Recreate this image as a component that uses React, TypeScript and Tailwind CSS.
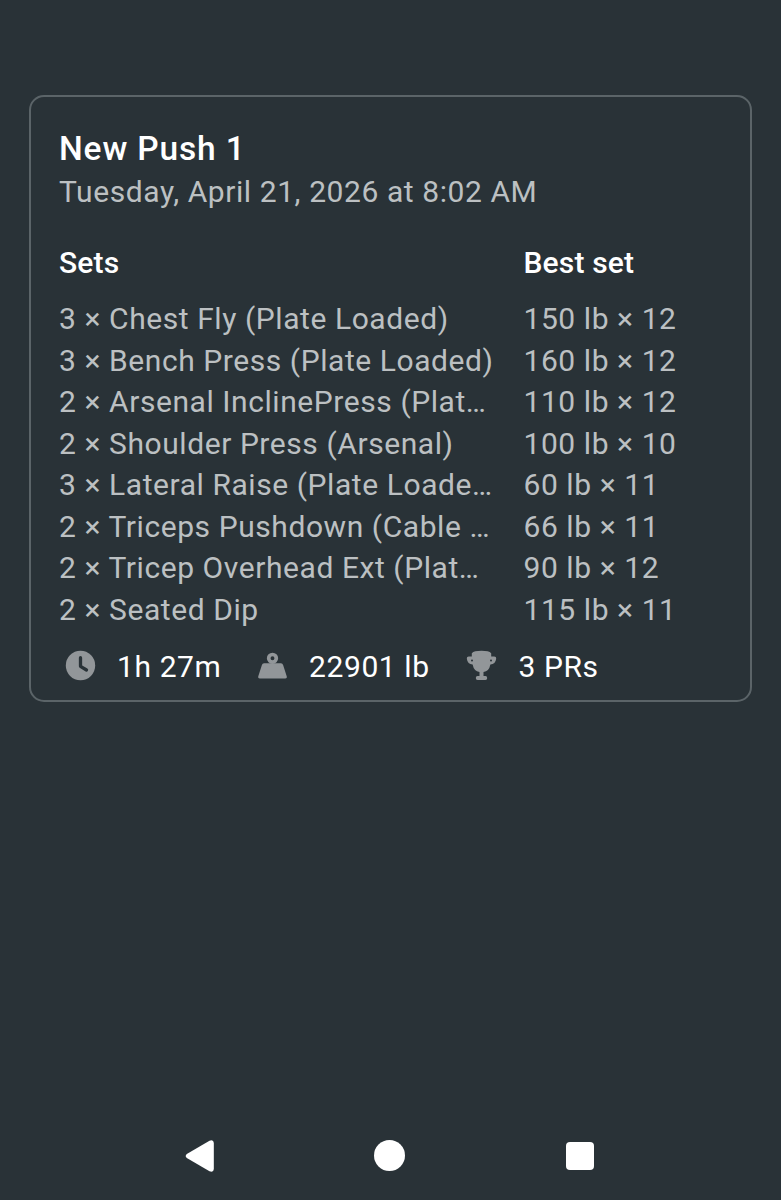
const rows: [string, string][] = [
  ["3 × Chest Fly (Plate Loaded)", "150 lb × 12"],
  ["3 × Bench Press (Plate Loaded)", "160 lb × 12"],
  ["2 × Arsenal InclinePress (Plat…", "110 lb × 12"],
  ["2 × Shoulder Press (Arsenal)", "100 lb × 10"],
  ["3 × Lateral Raise (Plate Loade…", "60 lb × 11"],
  ["2 × Triceps Pushdown (Cable …", "66 lb × 11"],
  ["2 × Tricep Overhead Ext (Plat…", "90 lb × 12"],
  ["2 × Seated Dip", "115 lb × 11"],
];

export default function App() {
  return (
    <div className="flex h-[1200px] w-[781px] flex-col bg-[#293237] pt-[95px] font-['Roboto',sans-serif] text-[30px] whitespace-nowrap text-[#bcc0c2]">
      <main className="mx-[29px] h-[607px] rounded-[15px] border-2 border-[#5b6468] pt-[31px] pl-7">
        <h1 className="h-[42px] text-[33.5px] leading-[42px] font-medium tracking-[0.85px] text-white">New Push 1</h1>
        <p className="h-[42px] leading-[43px] tracking-[0.58px]">Tuesday, April 21, 2026 at 8:02 AM</p>
        <div className="mt-[30px] flex h-[42px] leading-[42px] font-medium tracking-[0.15px] text-white">
          <span className="w-[464.5px]">Sets</span>
          <span>Best set</span>
        </div>
        <div className="mt-[14px] tracking-[0.57px]">
          {rows.map(([name, best]) => (
            <div key={name} className="flex h-[41.5px] leading-[42px]">
              <span className="w-[464.5px]">{name}</span>
              <span>{best}</span>
            </div>
          ))}
        </div>
        <div className="mt-[17px] flex h-[38px] items-center tracking-[0.6px] text-white">
          <svg className="ml-[5px] size-[32px] shrink-0 text-[#929699]" viewBox="0 0 32 32" fill="none">
            <circle cx="16.5" cy="15.5" r="14.7" fill="currentColor" />
            <path d="M16.5 7.7v8.6l6 3.7" stroke="#293237" strokeWidth="3.3" strokeLinecap="round" strokeLinejoin="round" />
          </svg>
          <span className="ml-[21px] w-[139px]">1h 27m</span>
          <svg className="size-[32px] shrink-0 text-[#929699]" viewBox="0 0 32 32" fill="currentColor">
            <path d="M8 13.3h17q1.600 0 2.100 1.600l3.700 11.600q.5 2.100-1.500 2.100H3.700q-2 0-1.500-2.100l3.700-11.600Q6.400 13.300 8 13.300Z" />
            <circle cx="16.500" cy="8.300" r="3.800" fill="none" stroke="currentColor" strokeWidth="3.700" />
          </svg>
          <span className="ml-[21px] w-[156px]">22901 lb</span>
          <svg className="size-[32px] shrink-0 text-[#929699]" viewBox="0 0 32 32" fill="currentColor">
            <path d="M6.800 3.200Q9 .800 16.500.800T26.200 3.200V6.500H29.200q2.200 0 2 2.300-.8 5.600-5.800 5.700Q24 21.500 18.500 22v4H20.500Q22.200 26 22.200 28T20.500 30H12.500Q10.800 30 10.800 28T12.500 26H14.500V22Q9 21.500 7.600 14.500 2.600 14.400 1.800 8.800 1.600 6.500 3.800 6.500H6.800Z" />
            <circle cx="7" cy="10.500" r="1" fill="#293237" />
            <circle cx="26" cy="10.500" r="1" fill="#293237" />
          </svg>
          <span className="ml-[21.500px]">3 PRs</span>
        </div>
      </main>
      <nav className="mt-auto mb-[28px] flex h-[33px] items-center pl-[184px] text-white">
        <svg className="size-[32px]" viewBox="0 0 32 32" fill="currentColor"><path d="M2.800 13.900 25.500.700Q29.600-.8 29.800 3v26q-.2 3.800-4.300 2.300L2.800 18.100Q.600 16 2.800 13.900Z" /></svg>
        <span className="ml-[158px] size-[31px] rounded-full bg-white" />
        <span className="ml-[161px] size-[28px] rounded-[4px] bg-white" />
      </nav>
    </div>
  );
}
